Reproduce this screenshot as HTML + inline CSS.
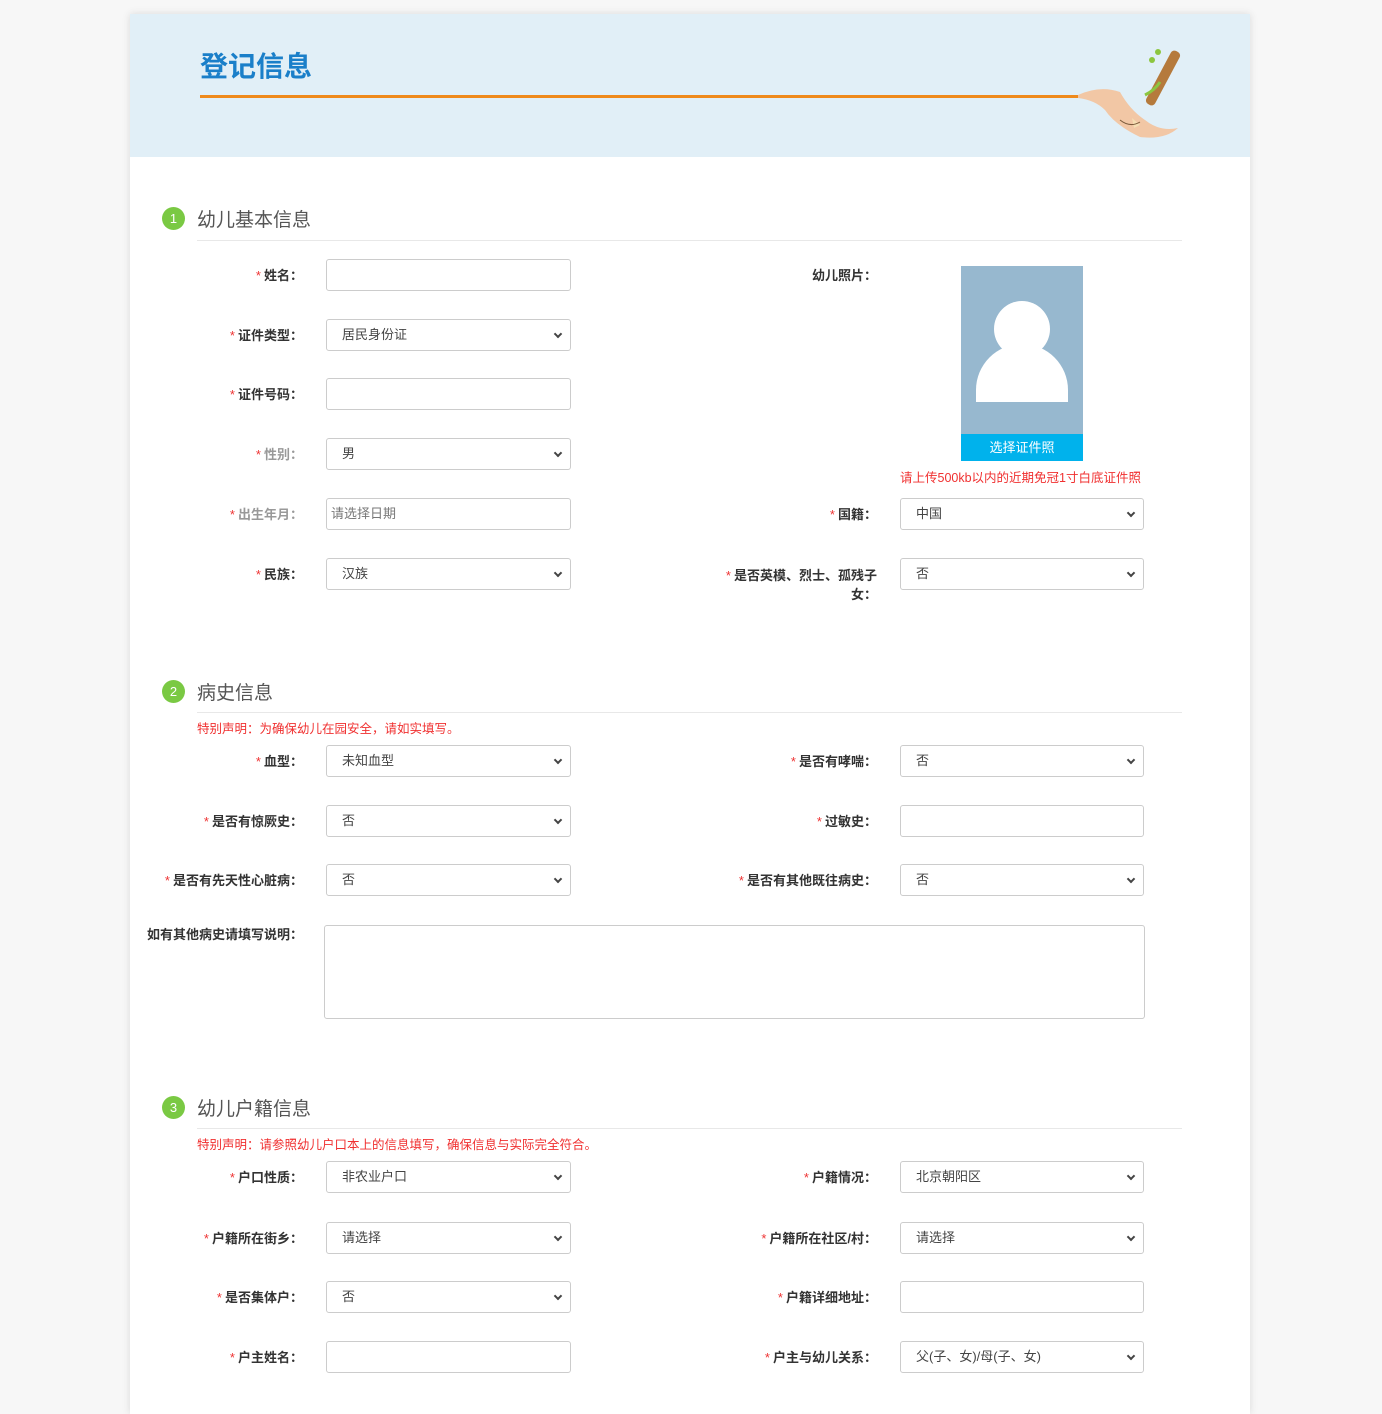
<!DOCTYPE html>
<html><head><meta charset="utf-8">
<style>
*{box-sizing:border-box;margin:0;padding:0}
body{width:1382px;height:1398px;background:#f7f7f7;font-family:"Liberation Sans","Noto Sans CJK SC",sans-serif;position:relative;overflow:hidden}
.card{position:absolute;left:130px;top:14px;width:1120px;height:1400px;background:#fff;box-shadow:0 0 8px rgba(0,0,0,.12)}
.hd{position:absolute;left:130px;top:14px;width:1120px;height:143px;background:#e1eff7}
.a{position:absolute}
.t{font-size:28px;font-weight:bold;color:#1a7fc9;left:200px;top:45px;letter-spacing:0px}
.ol{left:200px;top:95px;width:880px;height:3px;background:#ef8a1c}
.num{width:23px;height:23px;border-radius:50%;background:#7ac943;color:#fff;font-size:13px;text-align:center;line-height:23px;left:162px}
.st{left:197px;font-size:19px;color:#555}
.hr{left:197px;width:985px;height:1px;background:#e8e8e8}
.note{left:197px;font-size:12.5px;color:#f03030}
.lb{font-size:13px;font-weight:bold;color:#333;text-align:right;line-height:18px}
.ll{left:130px;width:173px}
.rl{left:640px;width:237px}
.lb i{font-style:normal;color:#e33;font-weight:normal;margin-right:3px}
.in{height:32px;border:1px solid #ccc;border-radius:3px;background:#fff;font-size:13px;color:#444;line-height:30px;padding-left:15px}
.li{left:326px;width:245px}
.ri{left:900px;width:244px}
.sel:after{content:"";position:absolute;right:9px;top:11px;width:4px;height:4px;border-right:2px solid #444;border-bottom:2px solid #444;transform:rotate(45deg)}
</style></head><body>
<div class="card"></div>
<div class="hd"></div>
<div class="a t">登记信息</div>
<div class="a ol"></div>
<svg class="a" style="left:1070px;top:40px" width="115" height="105" viewBox="0 0 115 105">
<path d="M8 55 Q30 45 50 52 Q60 70 75 80 Q90 92 108 88 Q95 100 70 97 Q45 85 35 70 Q25 60 8 58Z" fill="#f2c7a5"/>
<rect x="88" y="8" width="10" height="60" rx="4" fill="#b57a3c" transform="rotate(28 93 38)"/>
<path d="M62 78 L70 85 L64 88Z" fill="#f5deb3"/>
<circle cx="82" cy="20" r="3" fill="#8cc63f"/><circle cx="88" cy="12" r="3" fill="#8cc63f"/>
<path d="M75 55 Q85 50 90 42" stroke="#8cc63f" stroke-width="3" fill="none"/>
<path d="M50 80 Q60 88 70 82" stroke="#7a5a3a" stroke-width="1" fill="none"/>
</svg>

<div class="a num" style="top:207px">1</div><div class="a st" style="top:205px">幼儿基本信息</div><div class="a hr" style="top:240px"></div>

<div class="a lb ll" style="top:267px"><i>*</i>姓名：</div><div class="a in li" style="top:259px"></div>
<div class="a lb ll" style="top:327px"><i>*</i>证件类型：</div><div class="a in li sel" style="top:319px">居民身份证</div>
<div class="a lb ll" style="top:386px"><i>*</i>证件号码：</div><div class="a in li" style="top:378px"></div>
<div class="a lb ll" style="top:446px;color:#999"><i>*</i>性别：</div><div class="a in li sel" style="top:438px">男</div>
<div class="a lb ll" style="top:506px;color:#999"><i>*</i>出生年月：</div><div class="a in li" style="top:498px;padding-left:4px;color:#777">请选择日期</div>
<div class="a lb ll" style="top:566px"><i>*</i>民族：</div><div class="a in li sel" style="top:558px">汉族</div>

<div class="a lb rl" style="top:267px">幼儿照片：</div>
<div class="a" style="left:961px;top:266px;width:122px;height:195px;background:#97b8cf;overflow:hidden">
<div class="a" style="left:33px;top:35px;width:56px;height:56px;border-radius:50%;background:#fff"></div>
<div class="a" style="left:15px;top:78px;width:92px;height:58px;border-radius:46px 46px 0 0;background:#fff"></div>
<div class="a" style="left:0;top:168px;width:122px;height:28px;background:#00b2ec;color:#fff;font-size:13px;text-align:center;line-height:28px">选择证件照</div>
</div>
<div class="a" style="left:900px;top:467px;font-size:12.5px;color:#f03030">请上传500kb以内的近期免冠1寸白底证件照</div>
<div class="a lb rl" style="top:506px"><i>*</i>国籍：</div><div class="a in ri sel" style="top:498px">中国</div>
<div class="a lb rl" style="top:566px;line-height:19px"><i>*</i>是否英模、烈士、孤残子<br>女：</div><div class="a in ri sel" style="top:558px">否</div>

<div class="a num" style="top:680px">2</div><div class="a st" style="top:678px">病史信息</div><div class="a hr" style="top:712px"></div>
<div class="a note" style="top:718px">特别声明：为确保幼儿在园安全，请如实填写。</div>
<div class="a lb ll" style="top:753px"><i>*</i>血型：</div><div class="a in li sel" style="top:745px">未知血型</div>
<div class="a lb ll" style="top:813px"><i>*</i>是否有惊厥史：</div><div class="a in li sel" style="top:805px">否</div>
<div class="a lb ll" style="top:872px"><i>*</i>是否有先天性心脏病：</div><div class="a in li sel" style="top:864px">否</div>
<div class="a lb rl" style="top:753px"><i>*</i>是否有哮喘：</div><div class="a in ri sel" style="top:745px">否</div>
<div class="a lb rl" style="top:813px"><i>*</i>过敏史：</div><div class="a in ri" style="top:805px"></div>
<div class="a lb rl" style="top:872px"><i>*</i>是否有其他既往病史：</div><div class="a in ri sel" style="top:864px">否</div>
<div class="a lb ll" style="top:926px">如有其他病史请填写说明：</div>
<div class="a in" style="left:324px;top:925px;width:821px;height:94px"></div>

<div class="a num" style="top:1096px">3</div><div class="a st" style="top:1094px">幼儿户籍信息</div><div class="a hr" style="top:1128px"></div>
<div class="a note" style="top:1134px">特别声明：请参照幼儿户口本上的信息填写，确保信息与实际完全符合。</div>
<div class="a lb ll" style="top:1169px"><i>*</i>户口性质：</div><div class="a in li sel" style="top:1161px">非农业户口</div>
<div class="a lb ll" style="top:1230px"><i>*</i>户籍所在街乡：</div><div class="a in li sel" style="top:1222px">请选择</div>
<div class="a lb ll" style="top:1289px"><i>*</i>是否集体户：</div><div class="a in li sel" style="top:1281px">否</div>
<div class="a lb ll" style="top:1349px"><i>*</i>户主姓名：</div><div class="a in li" style="top:1341px"></div>
<div class="a lb rl" style="top:1169px"><i>*</i>户籍情况：</div><div class="a in ri sel" style="top:1161px">北京朝阳区</div>
<div class="a lb rl" style="top:1230px"><i>*</i>户籍所在社区/村：</div><div class="a in ri sel" style="top:1222px">请选择</div>
<div class="a lb rl" style="top:1289px"><i>*</i>户籍详细地址：</div><div class="a in ri" style="top:1281px"></div>
<div class="a lb rl" style="top:1349px"><i>*</i>户主与幼儿关系：</div><div class="a in ri sel" style="top:1341px">父(子、女)/母(子、女)</div>
</body></html>
